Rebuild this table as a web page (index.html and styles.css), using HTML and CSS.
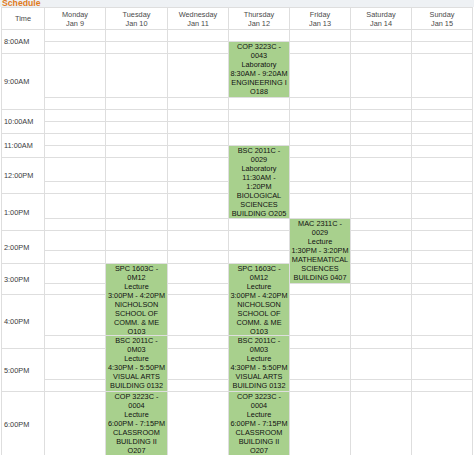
FILE: index.html
```html
<!DOCTYPE html>
<html>
<head>
<meta charset="utf-8">
<link rel="stylesheet" href="styles.css">
</head>
<body>
<div class="title-bar"><span class="title">Schedule</span></div>
<div class="schedule">
  <div class="head">Time</div>
  <div class="head">Monday<br>Jan 9</div>
  <div class="head">Tuesday<br>Jan 10</div>
  <div class="head">Wednesday<br>Jan 11</div>
  <div class="head">Thursday<br>Jan 12</div>
  <div class="head">Friday<br>Jan 13</div>
  <div class="head">Saturday<br>Jan 14</div>
  <div class="head">Sunday<br>Jan 15</div>

  <div class="time" style="grid-row: 2 / span 2">8:00AM</div>
  <div class="time" style="grid-row: 4 / span 2">9:00AM</div>
  <div class="time" style="grid-row: 6 / span 2">10:00AM</div>
  <div class="time" style="grid-row: 8 / span 2">11:00AM</div>
  <div class="time" style="grid-row: 10 / span 2">12:00PM</div>
  <div class="time" style="grid-row: 12 / span 2">1:00PM</div>
  <div class="time" style="grid-row: 14 / span 2">2:00PM</div>
  <div class="time" style="grid-row: 16 / span 2">3:00PM</div>
  <div class="time" style="grid-row: 18 / span 2">4:00PM</div>
  <div class="time" style="grid-row: 20 / span 2">5:00PM</div>
  <div class="time" style="grid-row: 22 / span 2">6:00PM</div>
  <div class="time" style="grid-row: 24 / span 2"></div>

  <div class="event thu" style="grid-row: 3 / span 2">COP 3223C -<br>0043<br>Laboratory<br>8:30AM - 9:20AM<br>ENGINEERING I<br>O188</div>
  <div class="event thu" style="grid-row: 9 / span 4">BSC 2011C -<br>0029<br>Laboratory<br>11:30AM -<br>1:20PM<br>BIOLOGICAL<br>SCIENCES<br>BUILDING O205</div>
  <div class="event fri" style="grid-row: 13 / span 4">MAC 2311C -<br>0029<br>Lecture<br>1:30PM - 3:20PM<br>MATHEMATICAL<br>SCIENCES<br>BUILDING 0407</div>
  <div class="event tue" style="grid-row: 16 / span 3">SPC 1603C -<br>0M12<br>Lecture<br>3:00PM - 4:20PM<br>NICHOLSON<br>SCHOOL OF<br>COMM. &amp; ME<br>O103</div>
  <div class="event thu" style="grid-row: 16 / span 3">SPC 1603C -<br>0M12<br>Lecture<br>3:00PM - 4:20PM<br>NICHOLSON<br>SCHOOL OF<br>COMM. &amp; ME<br>O103</div>
  <div class="event tue" style="grid-row: 19 / span 3">BSC 2011C -<br>0M03<br>Lecture<br>4:30PM - 5:50PM<br>VISUAL ARTS<br>BUILDING 0132</div>
  <div class="event thu" style="grid-row: 19 / span 3">BSC 2011C -<br>0M03<br>Lecture<br>4:30PM - 5:50PM<br>VISUAL ARTS<br>BUILDING 0132</div>
  <div class="event tue" style="grid-row: 22 / span 3">COP 3223C -<br>0004<br>Lecture<br>6:00PM - 7:15PM<br>CLASSROOM<br>BUILDING II<br>O207</div>
  <div class="event thu" style="grid-row: 22 / span 3">COP 3223C -<br>0004<br>Lecture<br>6:00PM - 7:15PM<br>CLASSROOM<br>BUILDING II<br>O207</div>

  <div class="c"></div><div class="c"></div><div class="c"></div><div class="c"></div><div class="c"></div><div class="c"></div><div class="c"></div><div class="c"></div><div class="c"></div><div class="c"></div>
  <div class="c"></div><div class="c"></div><div class="c"></div><div class="c"></div><div class="c"></div><div class="c"></div><div class="c"></div><div class="c"></div><div class="c"></div><div class="c"></div>
  <div class="c"></div><div class="c"></div><div class="c"></div><div class="c"></div><div class="c"></div><div class="c"></div><div class="c"></div><div class="c"></div><div class="c"></div><div class="c"></div>
  <div class="c"></div><div class="c"></div><div class="c"></div><div class="c"></div><div class="c"></div><div class="c"></div><div class="c"></div><div class="c"></div><div class="c"></div><div class="c"></div>
  <div class="c"></div><div class="c"></div><div class="c"></div><div class="c"></div><div class="c"></div><div class="c"></div><div class="c"></div><div class="c"></div><div class="c"></div><div class="c"></div>
  <div class="c"></div><div class="c"></div><div class="c"></div><div class="c"></div><div class="c"></div><div class="c"></div><div class="c"></div><div class="c"></div><div class="c"></div><div class="c"></div>
  <div class="c"></div><div class="c"></div><div class="c"></div><div class="c"></div><div class="c"></div><div class="c"></div><div class="c"></div><div class="c"></div><div class="c"></div><div class="c"></div>
  <div class="c"></div><div class="c"></div><div class="c"></div><div class="c"></div><div class="c"></div><div class="c"></div><div class="c"></div><div class="c"></div><div class="c"></div><div class="c"></div>
  <div class="c"></div><div class="c"></div><div class="c"></div><div class="c"></div><div class="c"></div><div class="c"></div><div class="c"></div><div class="c"></div><div class="c"></div><div class="c"></div>
  <div class="c"></div><div class="c"></div><div class="c"></div><div class="c"></div><div class="c"></div><div class="c"></div><div class="c"></div><div class="c"></div><div class="c"></div><div class="c"></div>
  <div class="c"></div><div class="c"></div><div class="c"></div><div class="c"></div><div class="c"></div><div class="c"></div><div class="c"></div><div class="c"></div><div class="c"></div><div class="c"></div>
  <div class="c"></div><div class="c"></div><div class="c"></div><div class="c"></div><div class="c"></div><div class="c"></div><div class="c"></div><div class="c"></div><div class="c"></div><div class="c"></div>
  <div class="c"></div><div class="c"></div><div class="c"></div><div class="c"></div><div class="c"></div><div class="c"></div><div class="c"></div><div class="c"></div><div class="c"></div><div class="c"></div>
  <div class="c"></div><div class="c"></div><div class="c"></div><div class="c"></div><div class="c"></div><div class="c"></div><div class="c"></div><div class="c"></div><div class="c"></div><div class="c"></div>
</div>
</body>
</html>
```

FILE: styles.css
```css
* {
  box-sizing: border-box;
}

html,
body {
  margin: 0;
  padding: 0;
  background: #ffffff;
  overflow: hidden;
}

body {
  width: 474px;
  height: 455px;
  font-family: "Liberation Sans", Arial, sans-serif;
}

.title-bar {
  height: 7px;
  padding-left: 2px;
  background: #eef1f4;
}

.title {
  display: block;
  font-size: 8.67px;
  line-height: 7px;
  font-weight: bold;
  color: #e07b1c;
}

.schedule {
  display: grid;
  width: 472px;
  margin-left: 1px;
  border: 1px solid #dedede;
  background: #dedede;
  gap: 1px;
  grid-template-columns: 42px 60px 61px 60px 60px 60px 60px 60px;
  grid-template-rows:
    21px 11px 11px 43px 11px 11px 11px 11px 11px 23px 11px 24px 11px
    19px 12px 19px 10px 40px 12px 30px 11px 63px 0px 11px 11px;
  font-size: 7.33px;
  line-height: 9px;
}

.c {
  background: #ffffff;
}

.head {
  display: flex;
  flex-direction: column;
  justify-content: center;
  background: #ffffff;
  color: #4a4a4a;
  text-align: center;
}

.time {
  grid-column: 1;
  display: flex;
  align-items: center;
  padding-left: 2px;
  background: #ffffff;
  color: #3a3a3a;
  white-space: nowrap;
}

.event {
  display: flex;
  flex-direction: column;
  justify-content: flex-start;
  background: #a8d08d;
  color: #111111;
  text-align: center;
  white-space: nowrap;
}

.tue {
  grid-column: 3;
}

.thu {
  grid-column: 5;
}

.fri {
  grid-column: 6;
}
```
